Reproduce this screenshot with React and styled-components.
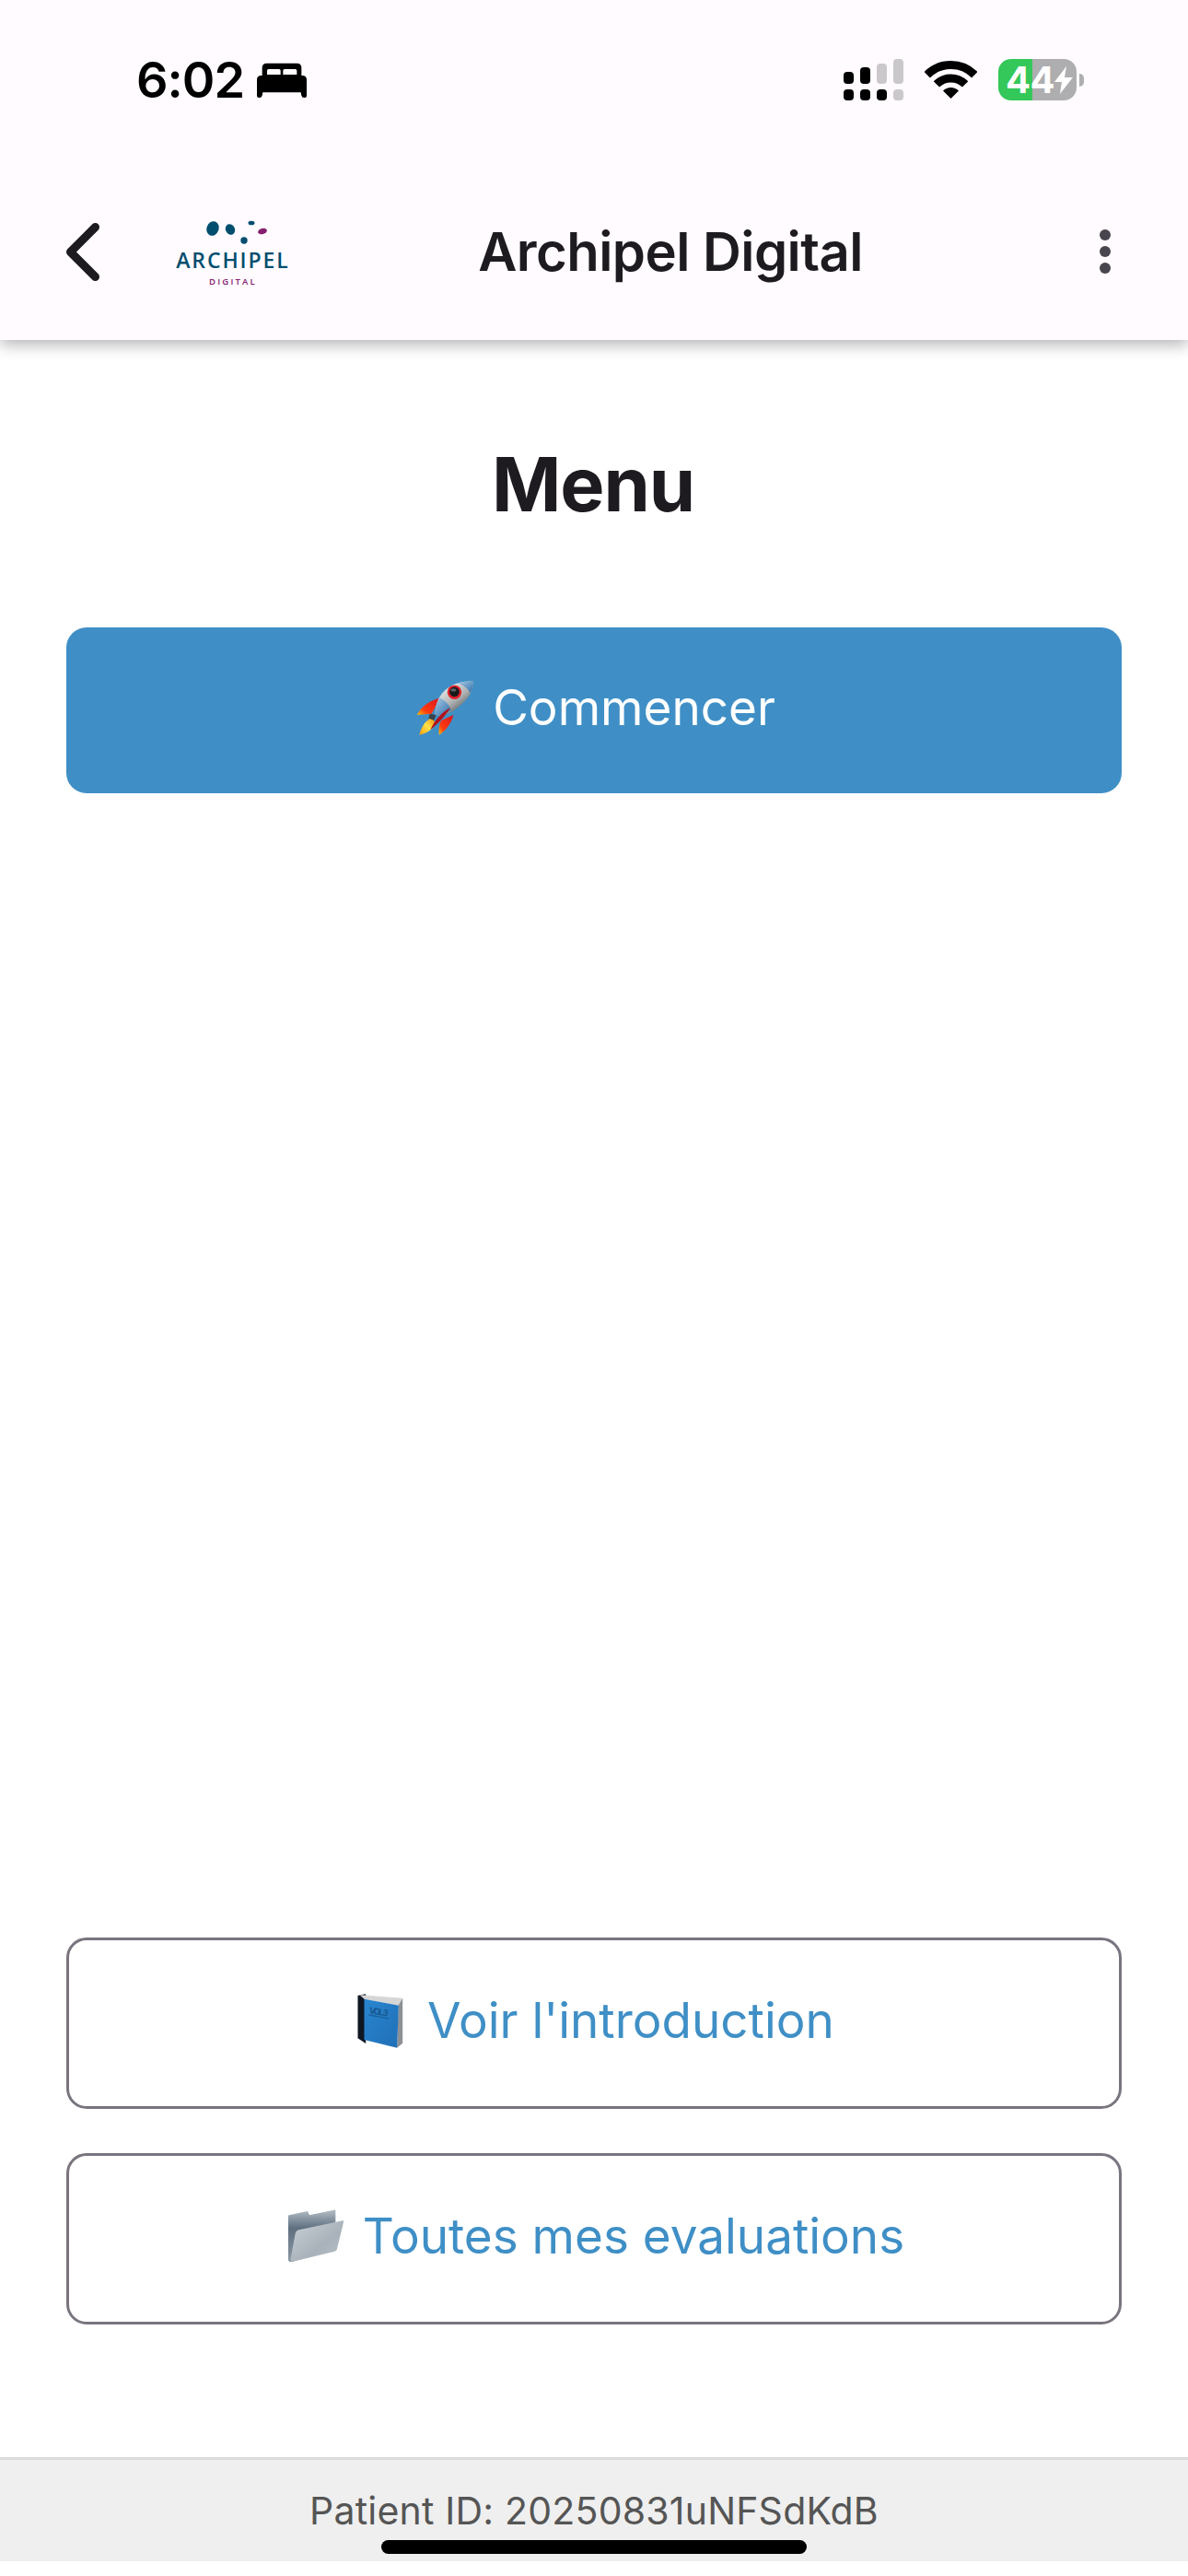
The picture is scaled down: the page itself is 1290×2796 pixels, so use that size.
import styled, { createGlobalStyle } from 'styled-components';

const GlobalStyle = createGlobalStyle`
  html, body {
    margin: 0;
    padding: 0;
    background: #fff;
  }
  * {
    box-sizing: border-box;
  }
`;

const Page = styled.div`
  position: relative;
  display: flex;
  flex-direction: column;
  width: 1290px;
  height: 2796px;
  padding-bottom: 16px;
  overflow: hidden;
  background: #fff;
  font-family: Inter, "Liberation Sans", sans-serif;
`;

const Header = styled.header`
  position: relative;
  z-index: 1;
  height: 369px;
  background: #fffbff;
  box-shadow: 0 5px 16px rgba(0, 0, 0, 0.3);
`;

const StatusBar = styled.div`
  display: flex;
  align-items: center;
  height: 177px;
  padding: 0 113px 4px 148px;
`;

const Time = styled.span`
  color: #000;
  font-size: 54px;
  font-weight: 600;
  letter-spacing: -1px;
  line-height: 60px;
`;

const BedIcon = styled.svg`
  width: 54px;
  height: 38px;
  margin-left: 14px;
`;

const StatusIcons = styled.div`
  display: flex;
  align-items: center;
  margin-left: auto;
`;

const Signal = styled.svg`
  width: 65px;
  height: 45px;
`;

const Wifi = styled.svg`
  width: 57px;
  height: 41px;
  margin-left: 23px;
`;

const Battery = styled.div`
  display: flex;
  align-items: center;
  justify-content: space-between;
  width: 85px;
  height: 45px;
  margin-left: 23px;
  padding: 0 4px 0 8px;
  border-radius: 14px;
  background: linear-gradient(to right, #34c759 37px, #aeadaf 37px);
`;

const BatteryLevel = styled.span`
  color: #fff;
  font-size: 40px;
  font-weight: 700;
  line-height: 45px;
  letter-spacing: -0.5px;
`;

const BatteryBolt = styled.svg`
  width: 20px;
  height: 30px;
`;

const BatteryCap = styled.div`
  width: 5px;
  height: 14px;
  margin-left: 3px;
  border-radius: 0 5px 5px 0;
  background: #aeadaf;
`;

const Toolbar = styled.div`
  display: flex;
  align-items: center;
  height: 192px;
  padding: 0 84px 0 72px;
`;

const BackIcon = styled.svg`
  width: 36px;
  height: 63px;
`;

const LogoMark = styled.div`
  display: flex;
  flex-direction: column;
  align-items: center;
  width: 124px;
  margin-left: 83px;
`;

const LogoDrops = styled.svg`
  width: 124px;
  height: 36px;
`;

const LogoName = styled.span`
  color: #004e6e;
  font-family: "Open Sans", sans-serif;
  font-size: 23px;
  font-weight: 600;
  line-height: 20px;
  letter-spacing: 1.9px;
  white-space: nowrap;
`;

const LogoSub = styled.span`
  margin-top: 9px;
  color: #85206f;
  font-family: "Open Sans", sans-serif;
  font-size: 9.5px;
  font-weight: 600;
  line-height: 10px;
  letter-spacing: 2.2px;
`;

const ToolbarTitle = styled.h1`
  flex: 1;
  margin: 0;
  padding-right: 53px;
  color: #1d1b20;
  font-size: 58px;
  font-weight: 600;
  letter-spacing: -0.55px;
  line-height: 70px;
  text-align: center;
`;

const MoreIcon = styled.svg`
  width: 12px;
  height: 48px;
`;

const Main = styled.main`
  flex: 1;
  display: flex;
  flex-direction: column;
  padding: 107px 72px 144px;
`;

const MenuTitle = styled.h2`
  margin: 0 0 105px;
  padding-right: 2px;
  color: #1d1b20;
  font-size: 81px;
  font-weight: 700;
  letter-spacing: -1.2px;
  line-height: 100px;
  text-align: center;
`;

const MenuButton = styled.button`
  display: flex;
  align-items: center;
  justify-content: center;
  gap: ${(props) => props.$gap || 20}px;
  width: 100%;
  height: ${(props) => (props.$primary ? 180 : 186)}px;
  padding: 0 0 6px 4px;
  border: ${(props) => (props.$primary ? 'none' : '3px solid #79747e')};
  border-radius: 22px;
  background: ${(props) => (props.$primary ? '#3f8fc6' : '#fff')};
  color: ${(props) => (props.$primary ? '#fff' : '#3f8fc6')};
  font-family: inherit;
  font-size: 53px;
  font-weight: 400;
  line-height: 64px;
`;

const BottomActions = styled.div`
  display: flex;
  flex-direction: column;
  gap: 48px;
  margin-top: auto;
`;

const Emoji = styled.svg`
  flex: none;
`;

const Footer = styled.footer`
  display: flex;
  align-items: center;
  justify-content: center;
  height: 113px;
  border-top: 3px solid #dcdcdc;
  background: #efefef;
  color: #555;
  font-size: 41px;
  letter-spacing: 0.2px;
  line-height: 50px;
`;

const HomeBar = styled.div`
  position: absolute;
  left: 414px;
  top: 2757px;
  width: 462px;
  height: 15px;
  border-radius: 8px;
  background: #000;
`;

const Rocket = () => (
  <Emoji width="63" height="62" viewBox="100 115 190 185">
    <defs>
      <linearGradient id="rocketBody" x1="0.25" y1="0.2" x2="0.75" y2="0.8">
        <stop offset="0" stopColor="#dfe3e5" />
        <stop offset="0.55" stopColor="#b0b3b4" />
        <stop offset="1" stopColor="#5f6568" />
      </linearGradient>
      <linearGradient id="rocketBlue" x1="0" y1="0" x2="1" y2="1">
        <stop offset="0" stopColor="#a9cbe6" />
        <stop offset="1" stopColor="#2d6da8" />
      </linearGradient>
      <linearGradient id="rocketFin" x1="1" y1="0" x2="0" y2="1">
        <stop offset="0" stopColor="#d8141c" />
        <stop offset="0.7" stopColor="#ff3b10" />
        <stop offset="1" stopColor="#ffc400" />
      </linearGradient>
      <linearGradient id="rocketFlame" x1="1" y1="0" x2="0" y2="1">
        <stop offset="0" stopColor="#f08a10" />
        <stop offset="0.5" stopColor="#ffe24a" />
        <stop offset="1" stopColor="#ff9c0a" />
      </linearGradient>
    </defs>
    <path d="M180 174C150 184 120 198 102 232L150 228Z" fill="url(#rocketFin)" />
    <path d="M222 232C215 260 195 285 175 297C172 280 175 262 182 250Z" fill="url(#rocketFin)" />
    <path d="M155 240C135 245 118 265 110 297C130 292 150 285 162 262Z" fill="url(#rocketFlame)" />
    <path d="M287 122C250 118 200 130 175 175C165 195 160 220 162 232C190 240 225 220 255 190C275 170 290 145 287 122Z" fill="url(#rocketBody)" />
    <path d="M287 122C268 120 250 122 236 128C258 134 272 148 276 160C285 148 289 135 287 122Z" fill="url(#rocketBlue)" />
    <path d="M175 175C165 195 160 220 162 232C178 236 196 229 214 216C208 198 194 182 175 175Z" fill="url(#rocketBlue)" />
    <path d="M211 208C196 235 166 265 146 280C164 240 190 220 211 208Z" fill="#b3121a" />
    <path d="M145 228L165 232L158 250L140 242Z" fill="#39434a" />
    <circle cx="225" cy="157" r="23" fill="#e0202a" />
    <circle cx="225" cy="156" r="16" fill="#17191b" />
    <ellipse cx="222" cy="150" rx="9" ry="5" fill="#5c6266" />
  </Emoji>
);

const Book = () => (
  <Emoji width="50" height="59" viewBox="299 74 149 177">
    <defs>
      <linearGradient id="bookCover" x1="0" y1="0" x2="1" y2="1">
        <stop offset="0" stopColor="#2a86d0" />
        <stop offset="1" stopColor="#1f6fb6" />
      </linearGradient>
    </defs>
    <path d="M300 80L326 75V236L300 219Z" fill="#0f1722" />
    <path d="M306 78L445 88L432 113L322 92Z" fill="#d6d6d6" />
    <path d="M432 112L446 88V235L428 250Z" fill="#8d9196" />
    <path d="M321 91L433 112L428 250L321 224Z" fill="url(#bookCover)" />
    <text x="336" y="138" transform="rotate(9 336 138)" fill="#17578f" fontFamily="Inter, sans-serif" fontSize="28" fontWeight="700" textLength="62">VOL 3</text>
    <path d="M336 143L400 155" stroke="#17578f" strokeWidth="4" strokeDasharray="3 1" />
  </Emoji>
);

const Folder = () => (
  <Emoji width="62" height="58" viewBox="74 176 186 174">
    <defs>
      <linearGradient id="folderBack" x1="0" y1="0" x2="0" y2="1">
        <stop offset="0" stopColor="#b3bdc5" />
        <stop offset="0.35" stopColor="#5f7080" />
        <stop offset="1" stopColor="#8b98a3" />
      </linearGradient>
      <linearGradient id="folderFront" x1="0" y1="0" x2="1" y2="1">
        <stop offset="0" stopColor="#c9d0d6" />
        <stop offset="0.6" stopColor="#a9b2ba" />
        <stop offset="1" stopColor="#b8c0c7" />
      </linearGradient>
    </defs>
    <path d="M80 195L140 182L146 195L226 178C230 177 231 179 231 182V300L92 346C84 349 77 346 77 340V198C77 196 78 195 80 195Z" fill="url(#folderBack)" />
    <path d="M112 243L254 213C258 212 258 215 257 218L236 305C235 310 232 312 228 313L92 346C85 348 83 340 85 335L100 255C102 248 105 245 112 243Z" fill="url(#folderFront)" />
  </Emoji>
);

const App = () => {
  return (
    <Page>
      <GlobalStyle />
      <Header>
        <StatusBar>
          <Time>6:02</Time>
          <BedIcon viewBox="445 58 162 114">
            <path
              fillRule="evenodd"
              d="M462 100V74Q462 60 477 60H575Q590 60 590 74V100ZM478 97H522V84Q522 79 517 79H483Q478 79 478 84ZM530 97H575V84Q575 79 570 79H535Q530 79 530 84Z"
            />
            <path d="M459 100H593Q607 100 607 114V166Q607 172 601 172H598Q592 172 590 165L588 155H464L462 165Q460 172 454 172H451Q445 172 445 166V114Q445 100 459 100Z" />
          </BedIcon>
          <StatusIcons>
            <Signal viewBox="0 0 65 45">
              <rect x="0" y="14" width="11" height="13" rx="4" />
              <rect x="18" y="9" width="11" height="18" rx="4" />
              <rect x="36" y="5" width="11" height="22" rx="4" fill="#cbc8cc" />
              <rect x="54" y="0" width="11" height="27" rx="4" fill="#cbc8cc" />
              <rect x="0" y="33" width="11" height="12" rx="4" />
              <rect x="18" y="33" width="11" height="12" rx="4" />
              <rect x="36" y="33" width="11" height="12" rx="4" />
              <rect x="54" y="33" width="11" height="12" rx="4" fill="#cbc8cc" />
            </Signal>
            <Wifi viewBox="0 0 57 41" fill="none" stroke="#000" strokeWidth="9">
              <path d="M2.7 15.2A36.5 36.5 0 0 1 54.3 15.2" />
              <path d="M12.9 25.4A22 22 0 0 1 44.1 25.4" />
              <path d="M28.5 41L20 32.5A12 12 0 0 1 37 32.5Z" fill="#000" stroke="none" />
            </Wifi>
            <Battery>
              <BatteryLevel>44</BatteryLevel>
              <BatteryBolt viewBox="0 0 20 30">
                <path d="M13 0L0 17H8L6 30L20 12H11Z" fill="#fff" />
              </BatteryBolt>
            </Battery>
            <BatteryCap />
          </StatusIcons>
        </StatusBar>
        <Toolbar>
          <BackIcon viewBox="0 0 36 63" fill="none" stroke="#1d1b20" strokeWidth="9" strokeLinecap="round" strokeLinejoin="round">
            <path d="M31.5 4.5L4.5 31.5L31.5 58.5" />
          </BackIcon>
          <LogoMark>
            <LogoDrops viewBox="0 0 124 36">
              <ellipse cx="40" cy="12" rx="6.5" ry="8" transform="rotate(20 40 12)" fill="#004e6e" />
              <ellipse cx="59" cy="13" rx="5" ry="6" transform="rotate(-25 59 13)" fill="#004e6e" />
              <ellipse cx="82" cy="6" rx="3.5" ry="2.3" fill="#004e6e" />
              <ellipse cx="94" cy="15" rx="5" ry="3" transform="rotate(-15 94 15)" fill="#85206f" />
              <circle cx="74" cy="25" r="3.7" fill="#004e6e" />
            </LogoDrops>
            <LogoName>ARCHIPEL</LogoName>
            <LogoSub>DIGITAL</LogoSub>
          </LogoMark>
          <ToolbarTitle>Archipel Digital</ToolbarTitle>
          <MoreIcon viewBox="0 0 12 48" fill="#49454f">
            <circle cx="6" cy="6" r="6" />
            <circle cx="6" cy="24" r="6" />
            <circle cx="6" cy="42" r="6" />
          </MoreIcon>
        </Toolbar>
      </Header>
      <Main>
        <MenuTitle>Menu</MenuTitle>
        <MenuButton $primary>
          <Rocket />
          Commencer
        </MenuButton>
        <BottomActions>
          <MenuButton $gap={26}>
            <Book />
            Voir l'introduction
          </MenuButton>
          <MenuButton>
            <Folder />
            Toutes mes evaluations
          </MenuButton>
        </BottomActions>
      </Main>
      <Footer>Patient ID: 20250831uNFSdKdB</Footer>
      <HomeBar />
    </Page>
  );
};

export default App;
